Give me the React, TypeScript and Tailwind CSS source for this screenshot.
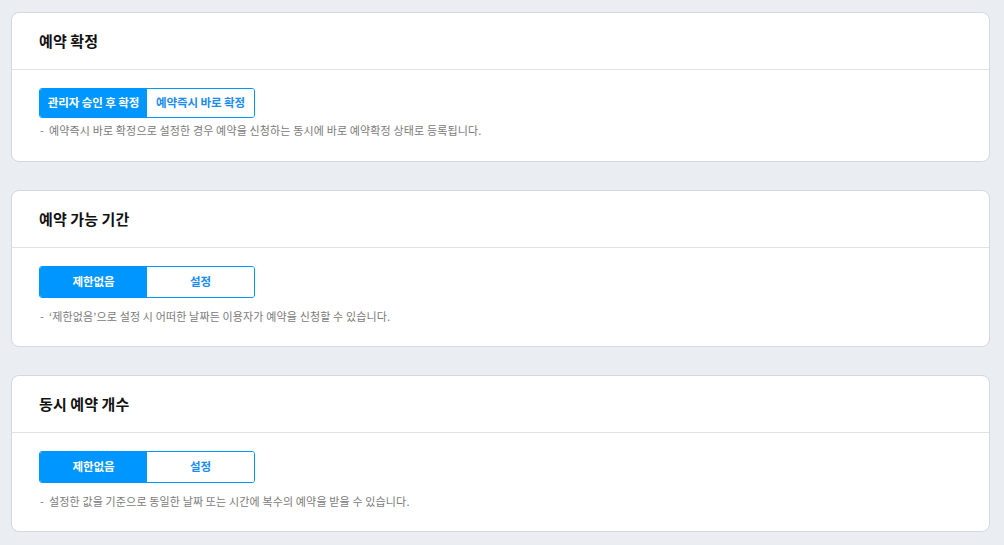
import React, { useState } from 'react';

type Section = {
  title: string;
  options: [string, string];
  note: string;
  tall: boolean;
};

const sections: Section[] = [
  {
    title: '예약 확정',
    options: ['관리자 승인 후 확정', '예약즉시 바로 확정'],
    note: '예약즉시 바로 확정으로 설정한 경우 예약을 신청하는 동시에 바로 예약확정 상태로 등록됩니다.',
    tall: false,
  },
  {
    title: '예약 가능 기간',
    options: ['제한없음', '설정'],
    note: '‘제한없음’으로 설정 시 어떠한 날짜든 이용자가 예약을 신청할 수 있습니다.',
    tall: true,
  },
  {
    title: '동시 예약 개수',
    options: ['제한없음', '설정'],
    note: '설정한 값을 기준으로 동일한 날짜 또는 시간에 복수의 예약을 받을 수 있습니다.',
    tall: true,
  },
];

const SettingCard: React.FC<{ section: Section }> = ({ section }) => {
  const [selected, setSelected] = useState(0);

  return (
    <div className="bg-white border border-[#d3d9e1] rounded-[8px]">
      <div className="h-[57px] flex items-center px-[27px] border-b border-[#dfe2e7]">
        <h2 className="text-[15px] font-bold text-[#111] tracking-[0.1px]">{section.title}</h2>
      </div>
      <div className={section.tall ? 'px-[27px] pt-[18px] pb-[23px]' : 'px-[27px] pt-[18px] pb-[24px]'}>
        <div
          className={
            section.tall
              ? 'flex w-[216px] h-[32px] border border-[#0096ff] rounded-[3px] overflow-hidden'
              : 'flex w-[216px] h-[30px] border border-[#0096ff] rounded-[3px] overflow-hidden'
          }
        >
          {section.options.map((opt, i) => (
            <button
              key={opt}
              onClick={() => setSelected(i)}
              className={
                selected === i
                  ? 'flex-1 flex items-center justify-center bg-[#0096ff] text-white text-[11.5px] font-bold tracking-[-0.1px]'
                  : 'flex-1 flex items-center justify-center bg-white text-[#1a8cf0] text-[11.5px] font-bold tracking-[-0.1px]'
              }
            >
              {opt}
            </button>
          ))}
        </div>
        <p
          className={
            section.tall
              ? 'mt-[11px] text-[11px] leading-[14px] text-[#7a7a7a] flex tracking-[0.15px]'
              : 'mt-[5px] text-[11px] leading-[14px] text-[#7a7a7a] flex tracking-[0.15px]'
          }
        >
          <span className="pl-[1px] w-[10px]">-</span>
          <span>{section.note}</span>
        </p>
      </div>
    </div>
  );
};

export default function App() {
  return (
    <div
      className="min-h-screen bg-[#eaedf2] pl-[11px] pr-[14px] pt-[12px] pb-[14px]"
      style={{ fontFamily: '"Noto Sans CJK KR", "Noto Sans", sans-serif' }}
    >
      <div className="flex flex-col gap-[28px]">
        {sections.map((s) => (
          <SettingCard key={s.title} section={s} />
        ))}
      </div>
    </div>
  );
}
